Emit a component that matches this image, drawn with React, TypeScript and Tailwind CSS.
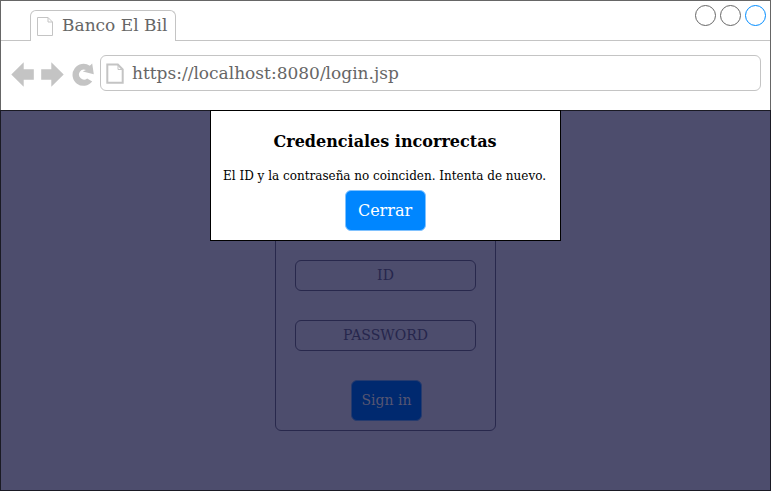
import React from "react";

const serif = "font-['DejaVu_Serif',serif]";

function PageIcon({ className, bold }: { className: string; bold?: boolean }) {
  return bold ? (
    <svg className={className} width="18" height="21" viewBox="0 0 18 21" fill="none" stroke="#c4c4c4">
      <path d="M1.3 1.5H11.8L16.7 6.5V19.7H1.3Z" strokeWidth="2" />
      <path d="M12 1.5V6.5H16.7" strokeWidth="1" />
    </svg>
  ) : (
    <svg className={className} width="16" height="19" viewBox="0 0 16 19" fill="none" stroke="#c4c4c4">
      <path d="M0.5 0.5H11L15.5 5V18.5H0.5Z" />
      <path d="M11 0.5V5H15.5" />
    </svg>
  );
}

function NavIcons() {
  return (
    <svg className="ml-[10px] mt-[20px] shrink-0" width="84" height="28" viewBox="0 0 84 28" fill="#c4c4c4">
      <path d="M0.3 13.5L12.7 1.3V8.2H22.8V18.8H12.7V25.7Z" />
      <path d="M52.7 13.5L40.3 1.3V8.2H30.2V18.8H40.3V25.7Z" />
      <path d="M78.8 4.8L81.2 2.4L82.8 13.2L71.8 10.6L75 8.9A5 5 0 1 0 76.2 17.4L81.2 20.6A11 11 0 1 1 78.8 4.8Z" />
    </svg>
  );
}

function Browser() {
  return (
    <header className="h-[109px] bg-white text-[17px] text-[#666666]">
      <div className="flex h-10">
        <div className="w-[29px] border-b border-[#c4c4c4]" />
        <div className="mt-[9px] flex w-[146px] rounded-t-[6px] border border-b-0 border-[#c4c4c4]">
          <PageIcon className="ml-[6px] mt-[6px] shrink-0" />
          <span className="ml-[9px] mt-px whitespace-nowrap leading-[26px]">Banco El Bil</span>
        </div>
        <div className="flex flex-1 justify-end gap-1 border-b border-[#c4c4c4] pr-1 pt-1">
          <i className="size-[21px] rounded-full border border-[#666666]" />
          <i className="size-[21px] rounded-full border border-[#666666]" />
          <i className="size-[21px] rounded-full border border-[#008cff]" />
        </div>
      </div>
      <div className="flex">
        <NavIcons />
        <div className="ml-[5px] mt-[14px] flex h-[36px] w-[661px] shrink-0 rounded-[6px] border border-[#c4c4c4]">
          <PageIcon bold className="ml-[5px] mt-[7px] shrink-0" />
          <span className="ml-[8px] mt-[4px] leading-[26px]">https://localhost:8080/login.jsp</span>
        </div>
      </div>
    </header>
  );
}

function LoginForm() {
  return (
    <form className="flex h-[231px] w-[221px] flex-col items-center rounded-[6px] border border-[#28284c] pt-[59px] text-[14px] text-[#26264c]">
      <div className="h-[31px] w-[181px] rounded-[6px] border border-[#28284c] text-center leading-[29px]">ID</div>
      <div className="mt-[29px] h-[31px] w-[181px] rounded-[6px] border border-[#28284c] text-center leading-[29px]">
        PASSWORD
      </div>
      <button
        type="button"
        className="ml-[1px] mt-[29px] h-[41px] w-[71px] shrink-0 whitespace-nowrap rounded-[6px] border border-[#263b6e] bg-[#00296f] pl-px text-[#565672]"
      >
        Sign in
      </button>
    </form>
  );
}

function ErrorDialog() {
  return (
    <div
      role="dialog"
      className="absolute -top-px left-[209px] flex h-[131px] w-[351px] flex-col items-center border border-black bg-white text-black"
    >
      <h1 className="mr-px mt-[21px] whitespace-nowrap text-[16px] font-bold leading-[20px]">Credenciales incorrectas</h1>
      <p className="mr-[2px] mt-[16px] whitespace-nowrap text-[12px] leading-[16px]">
        El ID y la contraseña no coinciden. Intenta de nuevo.
      </p>
      <button type="button" className="mt-[6px] h-[41px] w-[81px] rounded-[6px] border border-[#80c2ff] bg-[#0086ff] pr-px text-[16px] text-white">
        Cerrar
      </button>
    </div>
  );
}

export default function App() {
  return (
    <div className={`${serif} h-[491px] w-[772px] overflow-hidden bg-white`}>
      <div className="h-[491px] w-[771px] border border-b-0 border-[#666666]">
        <Browser />
        <main className="relative -mx-px flex h-[381px] justify-center border border-[#1a1a24] bg-[#4d4d6d] pt-[89px]">
          <LoginForm />
          <ErrorDialog />
        </main>
      </div>
    </div>
  );
}
